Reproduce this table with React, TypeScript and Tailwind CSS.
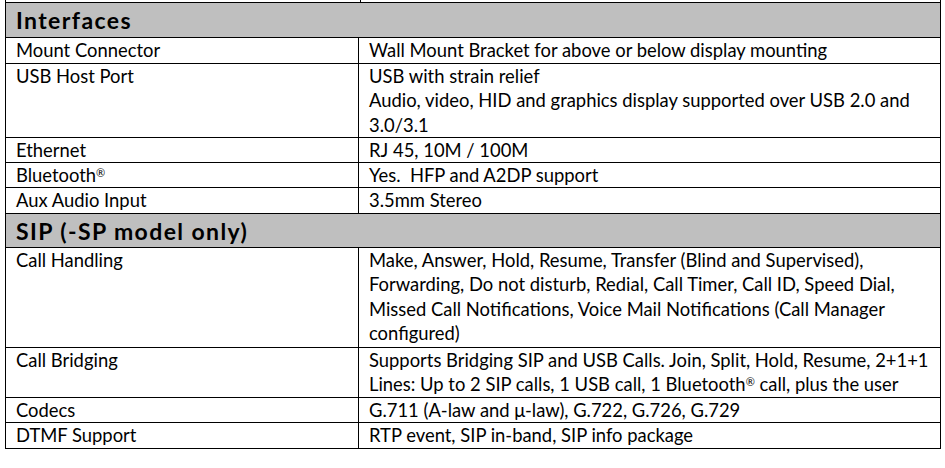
type Row = { label: string; lines: React.ReactNode[]; h: string };

const Reg = () => <span className="relative -top-[5px] text-[11px]">®</span>;

const interfaces: Row[] = [
  { label: "Mount Connector", lines: ["Wall Mount Bracket for above or below display mounting"], h: "h-[26px]" },
  {
    label: "USB Host Port",
    lines: [
      "USB with strain relief",
      "Audio, video, HID and graphics display supported over USB 2.0 and",
      "3.0/3.1",
    ],
    h: "h-[74px]",
  },
  { label: "Ethernet", lines: ["RJ 45, 10M / 100M"], h: "h-[25px]" },
  { label: "Bluetooth", lines: ["Yes.\u00a0 HFP and A2DP support"], h: "h-[25px]" },
  { label: "Aux Audio Input", lines: ["3.5mm Stereo"], h: "h-[26px]" },
];

const sip: Row[] = [
  {
    label: "Call Handling",
    lines: [
      "Make, Answer, Hold, Resume, Transfer (Blind and Supervised),",
      "Forwarding, Do not disturb, Redial, Call Timer, Call ID, Speed Dial,",
      "Missed Call Notifications, Voice Mail Notifications (Call Manager",
      "configured)",
    ],
    h: "h-[100px]",
  },
  {
    label: "Call Bridging",
    lines: [
      "Supports Bridging SIP and USB Calls. Join, Split, Hold, Resume, 2+1+1",
      <>
        Lines: Up to 2 SIP calls, 1 USB call, 1 Bluetooth<Reg /> call, plus the user
      </>,
    ],
    h: "h-[50px]",
  },
  { label: "Codecs", lines: ["G.711 (A-law and \u03bc-law), G.722, G.726, G.729"], h: "h-[25px]" },
  { label: "DTMF Support", lines: ["RTP event, SIP in-band, SIP info package"], h: "h-[26px]" },
];

function Header({ title, h }: { title: string; h: string }) {
  return (
    <div className={`${h} border-b border-black bg-[#bfbfbf] flex items-center pl-[10px]`}>
      <span className="text-[23px] font-bold tracking-[1.4px] leading-[34px] whitespace-nowrap">{title}</span>
    </div>
  );
}

function DataRow({ row }: { row: Row }) {
  return (
    <div className={`${row.h} border-b border-black grid grid-cols-[352px_1fr]`}>
      <div className="pl-[10px] whitespace-nowrap">
        {row.label}
        {row.label === "Bluetooth" && <Reg />}
      </div>
      <div className="border-l border-black pl-[10px]">
        {row.lines.map((l, i) => (
          <div key={i} className="whitespace-nowrap">
            {l}
          </div>
        ))}
      </div>
    </div>
  );
}

export default function App() {
  return (
    <div className="w-[945px] h-[468px] bg-white text-black font-[Lato,sans-serif] text-[18.4px] leading-[24.4px] overflow-hidden">
      <div className="ml-[5px] w-[936px] border-l border-r border-black">
        <div className="h-[3px] border-b border-black grid grid-cols-[354px_1fr]">
          <div />
          <div className="border-l border-black" />
        </div>
        <Header title="Interfaces" h="h-[35px]" />
        {interfaces.map((r) => (
          <DataRow key={r.label} row={r} />
        ))}
        <Header title="SIP (-SP model only)" h="h-[34px]" />
        {sip.map((r) => (
          <DataRow key={r.label} row={r} />
        ))}
      </div>
    </div>
  );
}
